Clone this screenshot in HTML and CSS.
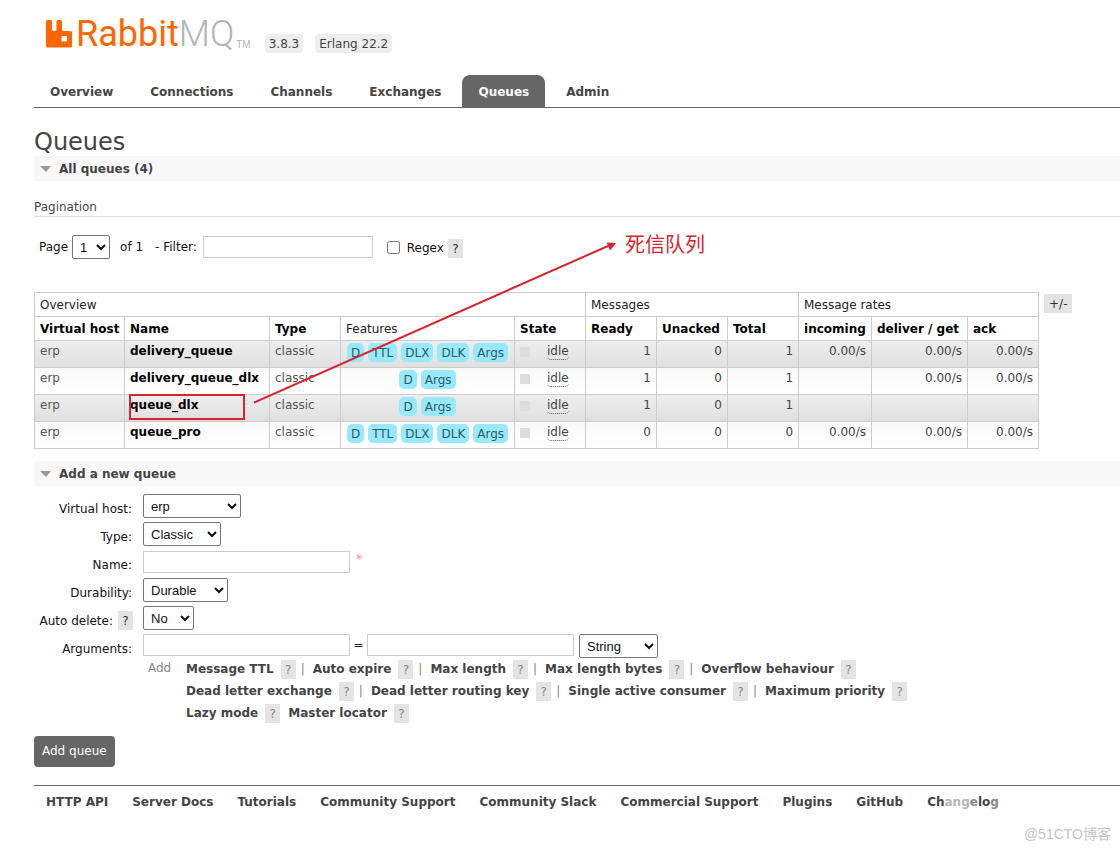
FILE: index.html
```html
<!DOCTYPE html>
<html lang="en">
<head>
<meta charset="utf-8">
<title>RabbitMQ Management</title>
<link rel="stylesheet" href="styles.css">
</head>
<body>
<div class="page">
<header>
  <div class="brand">
    <a class="logo" href="#" aria-label="RabbitMQ">
      <svg class="logo-mark" width="27" height="29" viewBox="0 0 27 29" aria-hidden="true"><path fill="#ff6600" fill-rule="evenodd" d="M1.500 1h3q1.500 0 1.500 1.500v8q0 1.500 1.500 1.500h1.500q1.500 0 1.500-1.500v-8q0-1.500 1.500-1.500h2.500q1.500 0 1.500 1.500v8q0 1.500 1.500 1.500h7q1.500 0 1.500 1.500v13.500q0 1.500-1.500 1.500h-23q-1.500 0-1.500-1.500v-24.500q0-1.500 1.500-1.500zM16.500 17q-1 0-1 1v3.500q0 1 1 1h3.500q1 0 1-1v-3.500q0-1-1-1z"/></svg><span class="logo-text">Rabbit<span class="logo-mq">MQ</span></span><span class="logo-tm">TM</span>
    </a>
    <span class="version">3.8.3</span>
    <span class="version">Erlang 22.2</span>
  </div>
  <nav class="tabs">
    <a href="#">Overview</a><a href="#">Connections</a><a href="#">Channels</a><a href="#">Exchanges</a><a href="#" class="selected">Queues</a><a href="#">Admin</a>
  </nav>
</header>
<main>
  <h1>Queues</h1>
  <h2>All queues (4)</h2>
  <h3>Pagination</h3>
  <div class="filter">
    <label for="page">Page</label>
    <select id="page" class="w-page"><option>1</option></select>
    <span class="of">of 1</span>
    <label for="filter" class="filter-label">- Filter:</label>
    <input type="text" id="filter" class="w-filter">
    <input type="checkbox" id="regex">
    <label for="regex" class="regex-label">Regex</label>
    <button class="help">?</button>
  </div>
  <div class="list">
    <table>
      <colgroup><col class="c-host"><col class="c-name"><col class="c-num"><col class="c-feat"><col class="c-num"><col class="c-num"><col class="c-num"><col class="c-num"><col class="c-in"><col class="c-get"><col class="c-num"></colgroup>
      <thead>
        <tr><th class="plain" colspan="5">Overview</th><th class="plain" colspan="3">Messages</th><th class="plain" colspan="3">Message rates</th></tr>
        <tr><th>Virtual host</th><th>Name</th><th>Type</th><th class="plain">Features</th><th>State</th><th>Ready</th><th>Unacked</th><th>Total</th><th>incoming</th><th>deliver / get</th><th>ack</th></tr>
      </thead>
      <tbody>
        <tr><td>erp</td><td><a href="#">delivery_queue</a></td><td>classic</td><td><div class="tags"><span>D</span><span>TTL</span><span>DLX</span><span>DLK</span><span>Args</span></div></td><td><div class="state"><abbr>idle</abbr></div></td><td class="r">1</td><td class="r">0</td><td class="r">1</td><td class="r">0.00/s</td><td class="r">0.00/s</td><td class="r">0.00/s</td></tr>
        <tr><td>erp</td><td><a href="#">delivery_queue_dlx</a></td><td>classic</td><td><div class="tags"><span>D</span><span>Args</span></div></td><td><div class="state"><abbr>idle</abbr></div></td><td class="r">1</td><td class="r">0</td><td class="r">1</td><td></td><td class="r">0.00/s</td><td class="r">0.00/s</td></tr>
        <tr><td>erp</td><td><a href="#">queue_dlx</a></td><td>classic</td><td><div class="tags"><span>D</span><span>Args</span></div></td><td><div class="state"><abbr>idle</abbr></div></td><td class="r">1</td><td class="r">0</td><td class="r">1</td><td></td><td></td><td></td></tr>
        <tr><td>erp</td><td><a href="#">queue_pro</a></td><td>classic</td><td><div class="tags"><span>D</span><span>TTL</span><span>DLX</span><span>DLK</span><span>Args</span></div></td><td><div class="state"><abbr>idle</abbr></div></td><td class="r">0</td><td class="r">0</td><td class="r">0</td><td class="r">0.00/s</td><td class="r">0.00/s</td><td class="r">0.00/s</td></tr>
      </tbody>
    </table>
    <button class="help columns">+/-</button>
  </div>
  <h2>Add a new queue</h2>
  <form>
    <div class="fields">
      <label for="vhost">Virtual host:</label>
      <div class="field"><select id="vhost" class="w-vhost"><option>erp</option></select></div>
      <label for="type">Type:</label>
      <div class="field"><select id="type" class="w-type"><option>Classic</option></select></div>
      <label for="name">Name:</label>
      <div class="field middle"><input type="text" id="name" class="w-text"><span class="mand">*</span></div>
      <label for="durable">Durability:</label>
      <div class="field"><select id="durable" class="w-durable"><option>Durable</option></select></div>
      <div class="label-help"><label for="auto">Auto delete:</label><button type="button" class="help">?</button></div>
      <div class="field"><select id="auto" class="w-auto"><option>No</option></select></div>
      <label for="argkey">Arguments:</label>
      <div class="field"><input type="text" id="argkey" class="w-text"><span class="eq">=</span><input type="text" class="w-text" aria-label="Argument value"><select class="w-string" aria-label="Argument type"><option>String</option></select></div>
    </div>
    <div class="shortcuts">
      <span class="add">Add</span>
      <div>
        <div class="line"><a href="#">Message TTL</a><button type="button" class="help">?</button><i>|</i><a href="#">Auto expire</a><button type="button" class="help">?</button><i>|</i><a href="#">Max length</a><button type="button" class="help">?</button><i>|</i><a href="#">Max length bytes</a><button type="button" class="help">?</button><i>|</i><a href="#">Overflow behaviour</a><button type="button" class="help">?</button></div>
        <div class="line"><a href="#">Dead letter exchange</a><button type="button" class="help">?</button><i>|</i><a href="#">Dead letter routing key</a><button type="button" class="help">?</button><i>|</i><a href="#">Single active consumer</a><button type="button" class="help">?</button><i>|</i><a href="#">Maximum priority</a><button type="button" class="help">?</button></div>
        <div class="line"><a href="#">Lazy mode</a><button type="button" class="help">?</button><a href="#" class="next">Master locator</a><button type="button" class="help">?</button></div>
      </div>
    </div>
    <button type="button" class="submit">Add queue</button>
  </form>
</main>
<footer>
  <a href="#">HTTP API</a><a href="#">Server Docs</a><a href="#">Tutorials</a><a href="#">Community Support</a><a href="#">Community Slack</a><a href="#">Commercial Support</a><a href="#">Plugins</a><a href="#">GitHub</a><a href="#">Ch<span class="faded">ang</span><span class="half">e</span>lo<span class="half">g</span></a>
</footer>
<div class="watermark">@51CTO博客</div>
<svg class="marks" width="720" height="430" viewBox="0 0 720 430" aria-hidden="true">
  <rect x="130" y="395" width="114" height="24" fill="none" stroke="#d9232e" stroke-width="2"/>
  <path d="M254 402.500L608 246" stroke="#d9232e" stroke-width="2" fill="none"/>
  <path d="M616 243L610 250.500L606.500 242.500z" fill="#d9232e"/>
</svg>
<div class="note">死信队列</div>
</div>
</body>
</html>
```
FILE: styles.css
```css
* { box-sizing: border-box; }
body {
  margin: 0;
  background: #fff;
  color: #444;
  font: 12px/16px "DejaVu Sans", Verdana, "Noto Sans CJK SC", sans-serif;
}
a { color: #444; font-weight: bold; text-decoration: none; }
.page { position: relative; padding: 16px 0 8px 34px; overflow: hidden; }
.brand { display: flex; align-items: flex-end; height: 37px; padding-left: 12px; }
.logo { display: flex; align-items: flex-end; align-self: flex-start; height: 36px; margin-right: 14px; padding-top: 3px; }
.logo-mark { flex: none; align-self: flex-start; }
.logo-text { margin-left: 3px; color: #f60; font: 36px/36px Roboto, sans-serif; }
.logo-mq { color: #b4b4b4; font-weight: 300; }
.logo-tm { margin-left: 2px; color: #b4b4b4; font: 10px/14px "Liberation Sans", sans-serif; }
.version {
  margin-right: 12px;
  padding: 2px 4px 1px;
  border-radius: 4px;
  background: #eee;
}
.tabs { display: flex; gap: 5px; margin-top: 22px; border-bottom: 1px solid #666; }
.tabs a { padding: 9px 16px 7px; border-radius: 8px 8px 0 0; }
.tabs .selected { background: #666; color: #fff; }
h1 { margin: 21px 0 0; font-size: 24px; line-height: 27px; font-weight: normal; }
h2 {
  display: flex;
  align-items: center;
  margin: 0;
  padding: 5px 6px 4px;
  background: #f8f8f8;
  font-size: 12px;
  line-height: 16px;
}
h2::before {
  content: "";
  margin-right: 8px;
  border: solid transparent;
  border-width: 6px 5px 0 6px;
  border-top-color: #999;
}
h3 {
  margin: 18px 0;
  border-bottom: 1px solid #ddd;
  font-size: 12px;
  line-height: 17px;
  font-weight: normal;
}
.filter { display: flex; align-items: center; padding-left: 5px; color: #111; }
.filter .w-page { width: 38px; margin: 0 10px 0 4px; }
.filter-label { margin: 0 6px 0 12px; }
.filter .w-filter { width: 170px; }
.filter [type=checkbox] { margin: 0 7px 0 14px; width: 13px; height: 13px; }
.regex-label { padding-top: 2px; }
.filter .help { margin: 2px 0 0 4px; }
select {
  height: 24px;
  padding: 0 3px;
  border: 1px solid #767676;
  border-radius: 2px;
  background: #fff;
  color: #111;
  font: 13px "Liberation Sans", Arial, sans-serif;
}
input[type=text] { height: 22px; padding: 2px; border: 1px solid #ccc; background: #fff; font: 12px "DejaVu Sans", sans-serif; }
.help {
  flex: none;
  min-width: 15px;
  padding: 2px 4px 1px;
  border: 0;
  background: #e4e4e4;
  color: #333;
  font: 12px/16px "DejaVu Sans", sans-serif;
}
.list { display: flex; align-items: flex-start; margin: 33px 0 12px; }
.columns { margin: 2px 0 0 5px; padding: 2px 5px 1px; }
table { flex: none; width: 1005px; border-collapse: collapse; table-layout: fixed; }
.c-host { width: 90px; }
.c-name { width: 145px; }
.c-num { width: 71px; }
.c-feat { width: 174px; }
.c-in { width: 73px; }
.c-get { width: 96px; }
th, td { border: 1px solid #ccc; text-align: left; white-space: nowrap; vertical-align: top; }
th { padding: 4px 5px 3px; color: #000; }
.plain { font-weight: normal; color: #222; }
td { height: 27px; padding: 2px 5px 3px; color: #555; }
td a { color: #000; }
.r { text-align: right; color: #444; }
tbody tr { background: linear-gradient(#fafafa, #fff); }
tbody tr:nth-child(odd) { background: linear-gradient(#eee, #dfdfdf); }
.tags { display: flex; justify-content: center; gap: 4px; }
.tags span { padding: 2px 4px 1px; border-radius: 5px; background: #98e9fb; color: #2b5b68; }
.state { display: flex; align-items: center; color: #444; }
.state::before { content: ""; width: 10px; height: 10px; margin-right: 17px; background: #ddd; }
.state abbr { border-bottom: 1px dotted #555; line-height: 16px; border-radius: 4px; }
.fields { display: grid; grid-template-columns: 98px 1fr; gap: 4px 11px; padding-top: 8px; color: #111; }
.fields > label, .label-help { padding-top: 7px; height: 24px; text-align: right; }
.label-help { display: flex; align-items: center; justify-content: flex-end; padding-top: 5px; white-space: nowrap; }
.label-help .help { margin: 0 -1px 0 5px; }
.field { display: flex; align-items: flex-start; height: 24px; }
.middle { padding-top: 1px; }
.w-vhost { width: 98px; }
.w-type { width: 78px; }
.w-text { width: 207px; }
.w-durable { width: 85px; }
.w-auto { width: 51px; }
.w-string { width: 79px; margin-left: 5px; }
.mand { margin: 0 6px; color: #f88; }
.eq { width: 17px; padding-top: 3px; text-align: center; }
.shortcuts { display: flex; margin-left: 114px; color: #888; }
.add { width: 38px; padding-top: 2px; }
.line { display: flex; align-items: center; height: 22px; white-space: nowrap; }
.line .help { margin-left: 7px; color: #888; }
.line i { margin: 0 8px 0 5px; font-style: normal; }
.line .next { margin-left: 8px; }
.submit {
  display: block;
  margin: 12px 0 18px;
  padding: 8px;
  border: 0;
  border-radius: 4px;
  background: #666;
  color: #fff;
  font: 12px/15px "DejaVu Sans", sans-serif;
}
footer { display: flex; gap: 24px; padding: 8px 12px; border-top: 1px solid #666; white-space: nowrap; }
.faded { color: #b4b4b4; }
.half { color: #888; }
.watermark { margin: 6px 9px 0 0; color: #c4c4c4; text-align: right; font: 14px/20px "Liberation Sans", "Noto Sans CJK SC", sans-serif; }
.marks { position: absolute; left: 0; top: 0; pointer-events: none; }
.note { position: absolute; left: 625px; top: 230px; color: #d9232e; font: 20px/28px "Noto Sans CJK SC", sans-serif; }
```
